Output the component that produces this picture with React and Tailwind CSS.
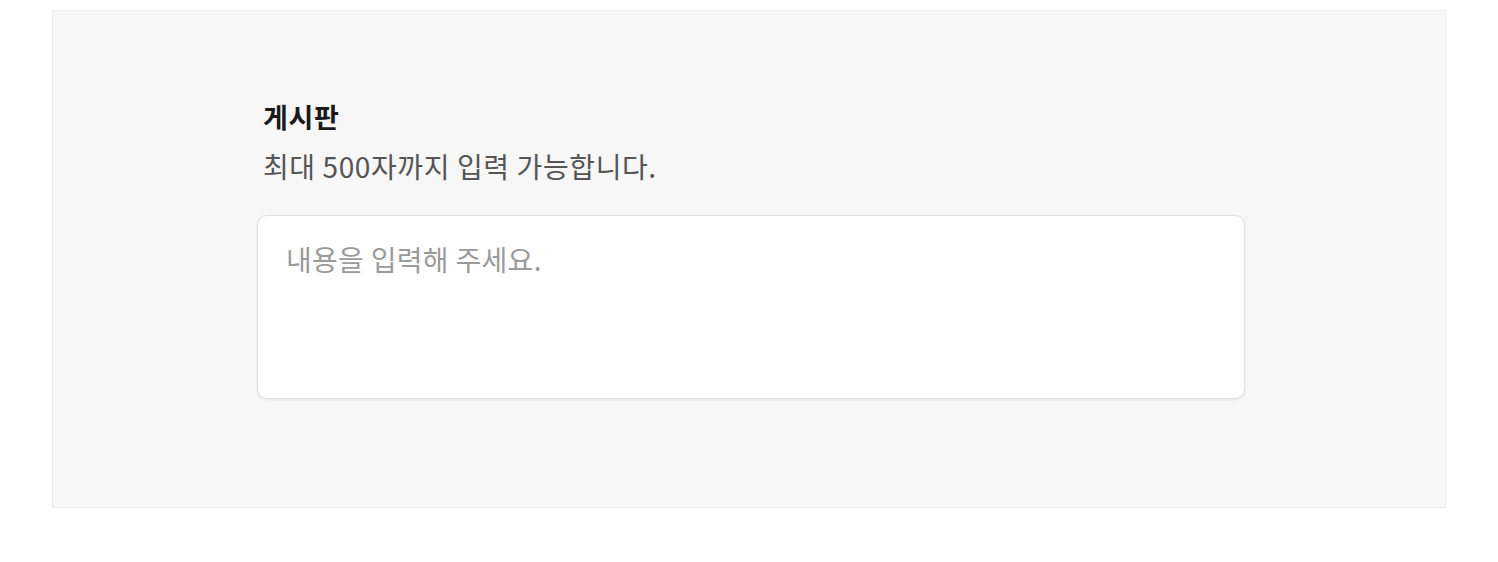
import React from 'react';

const FONT = { fontFamily: '"Noto Sans CJK KR", "Noto Sans", sans-serif' };

export default function App() {
    return (
        <div className="w-full bg-white pt-[10px] px-[52px]" style={FONT}>
            <div className="h-[498px] border border-[#ebebeb] bg-[#f7f7f7]">
                <div className="mx-auto w-[988px] pt-[88px] pl-[2px]">
                    <h2 className="pl-[6px] text-[27px] leading-[36px] font-bold tracking-[0.6px] text-[#1a1a1a]">게시판</h2>
                    <p className="mt-[13px] pl-[6px] text-[28px] leading-[36px] tracking-[0.6px] text-[#555555]">
                        최대 500자까지 입력 가능합니다.
                    </p>
                    <textarea
                        className="mt-[31px] block h-[184px] w-[988px] resize-none rounded-[10px] border border-[#e2e2e2] bg-white pl-[28px] pr-[30px] pt-[25px] text-[28px] leading-[36px] tracking-[0.3px] text-[#222] shadow-[0_1px_3px_rgba(0,0,0,0.08)] outline-none placeholder:text-[#9a9a9a]"
                        placeholder="내용을 입력해 주세요."
                        style={FONT}
                    />
                </div>
            </div>
        </div>
    );
}
